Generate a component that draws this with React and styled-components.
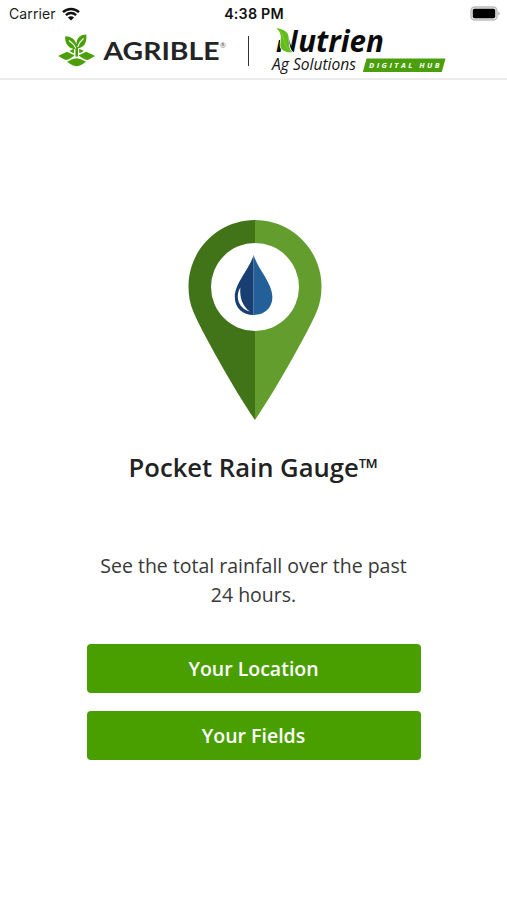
import styled, { createGlobalStyle } from "styled-components";

const GlobalStyle = createGlobalStyle`
  * {
    box-sizing: border-box;
  }

  body {
    margin: 0;
    background: #fff;
  }
`;

const Screen = styled.div`
  width: 507px;
  height: 900px;
  display: flex;
  flex-direction: column;
  background: #fff;
  font-family: "Open Sans", "Noto Sans", sans-serif;
  overflow: hidden;
`;

const StatusBar = styled.div`
  height: 27px;
  flex-shrink: 0;
  display: grid;
  grid-template-columns: 1fr auto 1fr;
  align-items: center;
  padding: 0 7px 0 9px;
  font-family: Inter, "Liberation Sans", sans-serif;
  font-size: 14px;
  line-height: 27px;
  color: #1c1c1c;
`;

const Carrier = styled.div`
  display: flex;
  align-items: center;
  gap: 6px;
  height: 27px;
  letter-spacing: 0.1px;
`;

const Clock = styled.div`
  font-weight: 600;
  font-size: 14.3px;
  height: 27px;
  letter-spacing: 0.2px;
  margin-left: -1px;
  color: #111;
`;

const Battery = styled.svg`
  justify-self: end;
  display: block;
`;

const Header = styled.header`
  height: 53px;
  flex-shrink: 0;
  display: flex;
  align-items: flex-start;
  padding-left: 56px;
  border-bottom: 2px solid #ececec;
`;

const Logo = styled.svg`
  display: block;
  flex-shrink: 0;
  overflow: visible;
`;

const Divider = styled.div`
  width: 1px;
  height: 30px;
  margin: 9px 21px 0 19px;
  background: #333;
`;

const Content = styled.main`
  flex: 1;
  display: flex;
  flex-direction: column;
  align-items: center;
  padding-top: 140px;
`;

const Pin = styled.svg`
  display: block;
  margin-left: 2px;
`;

const Title = styled.h1`
  margin: 29px 0 0;
  font-size: 25.6px;
  font-weight: 600;
  line-height: 38px;
  color: #222;
  white-space: nowrap;
`;

const Description = styled.p`
  width: 320px;
  margin: 64px 0 0;
  font-size: 19.5px;
  line-height: 29px;
  text-align: center;
  color: #383838;
`;

const Actions = styled.div`
  width: 334px;
  margin-top: 35px;
  display: flex;
  flex-direction: column;
  gap: 18px;
`;

const Button = styled.button`
  height: 49px;
  padding: 0 0 1px;
  border: none;
  border-radius: 4px;
  background: #4a9f00;
  color: #fff;
  font-family: inherit;
  font-size: 19.5px;
  font-weight: 600;
  cursor: pointer;
`;

function WifiIcon() {
  return (
    <svg width="18" height="14" viewBox="0 0 18 14" fill="none">
      <path d="M1 5.1C5.5 0.8 12.5 0.8 17 5.1" stroke="#111" strokeWidth="2.5" />
      <path d="M3.9 8.1C6.8 5.3 11.2 5.3 14.1 8.1" stroke="#111" strokeWidth="2.3" />
      <path d="M9 13.6L5.9 10.4C7.6 8.8 10.4 8.8 12.1 10.4Z" fill="#111" />
    </svg>
  );
}

function BatteryIcon() {
  return (
    <Battery width="30" height="15" viewBox="0 0 30 15">
      <rect x="1" y="1" width="26" height="13" rx="3.8" fill="#e4e4e4" stroke="#bdbdbd" strokeWidth="1.4" />
      <rect x="2.8" y="2.8" width="22.4" height="9.4" rx="1.8" fill="#000" />
      <path d="M28.3 5.5C30.2 6.2 30.2 8.8 28.3 9.5Z" fill="#aaa" />
    </Battery>
  );
}

function AgribleLogo() {
  return (
    <Logo width="173" height="48" viewBox="0 0 173 48">
      {/* field plots */}
      <g fill="#4a9f0b">
        <path d="M2 29L11 24.8L19 28.4C16 30 13 32.6 10 33C7 32.5 5 30 2 29Z" />
        <path d="M39.2 29L30.2 24.8L22.2 28.4C25.2 30 28.2 32.6 31.2 33C34.2 32.5 36.2 30 39.2 29Z" />
        <path d="M11 34.8C14 33.5 17 31.2 20.6 31.2C24.2 31.2 27.2 33.5 30.2 34.8C27 36.5 24.2 39.3 20.6 39.3C17 39.3 14 36.5 11 34.8Z" />
        <path d="M13.2 23.9L18 21.8V26C16.2 25.6 15 24.6 13.2 23.9Z" />
        <path d="M28 23.9L23.2 21.8V26C25 25.6 26.2 24.6 28 23.9Z" />
      </g>
      {/* sprout */}
      <path d="M18.4 18H23V29.8H18.4Z" fill="#fff" />
      <g fill="#4a9f0b">
        <path d="M19.4 17H22V29.6H19.4Z" />
        <path d="M20.6 22.5C12 21.8 8.8 16.5 9.2 9.2C17.2 9.6 21.5 14.5 20.6 22.5Z" />
        <path d="M21 21.5C18.8 13 22.5 7.6 30.3 7.4C31.2 15 28.5 20.5 21 21.5Z" />
      </g>
      <path d="M13 13.5C16 15.5 18.4 18 20 21.5M27.5 11.5C25 13.5 22.8 16.5 21.7 20" fill="none" stroke="#fff" strokeWidth="1.1" />
      <text
        x="47.5"
        y="33.4"
        fontFamily="Lato, sans-serif"
        fontWeight="700"
        fontSize="25.6"
        textLength="116"
        lengthAdjust="spacingAndGlyphs"
        fill="#242426"
      >
        AGRIBLE
      </text>
      <text x="164" y="20.5" fontFamily="Lato, sans-serif" fontSize="7" fill="#555">
        ®
      </text>
    </Logo>
  );
}

function NutrienLogo() {
  return (
    <Logo width="180" height="50" viewBox="0 0 180 50">
      <text
        x="5.8"
        y="25.2"
        fontFamily="Open Sans, sans-serif"
        fontWeight="700"
        fontStyle="italic"
        fontSize="29.8"
        textLength="108"
        lengthAdjust="spacingAndGlyphs"
        fill="#0b0b0b"
      >
        Nutrien
      </text>
      {/* the leaf lies over the diagonal of the first letter */}
      <path d="M5 0H17L19 5L10 13H5Z" fill="#fff" />
      <path
        d="M6.2 1.2C13.5 1.8 18.2 4.8 18.6 10C19 16 18 21 22.6 25.3C14 25.6 9.6 22.5 10.4 16.5C11.4 10.5 11.4 5 6.2 1.2Z"
        fill="#62bd18"
        stroke="#fff"
        strokeWidth="1.2"
        paintOrder="stroke"
      />
      <path d="M9.5 3.5C15 9 12.5 18 20.5 24.4" fill="none" stroke="#86cc46" strokeWidth="0.8" />
      <text
        x="2"
        y="43.2"
        fontFamily="Open Sans, sans-serif"
        fontStyle="italic"
        fontSize="15.7"
        textLength="84"
        lengthAdjust="spacingAndGlyphs"
        fill="#151515"
      >
        Ag Solutions
      </text>
      <path d="M96.5 31.5H175.5L171.8 45H92.8Z" fill="#4a9f0b" />
      <text
        x="99"
        y="41"
        fontFamily="Open Sans, sans-serif"
        fontWeight="700"
        fontStyle="italic"
        fontSize="7.6"
        textLength="70.5"
        fill="#fff"
      >
        DIGITAL HUB
      </text>
    </Logo>
  );
}

function RainPin() {
  return (
    <Pin width="134" height="200" viewBox="0 0 134 200">
      <path d="M67 0C30 0 0.5 30 0.5 66.5C0.5 76 2 84 5.5 92C12 108 45 168 67 200Z" fill="#417318" />
      <path d="M67 0C104 0 133.5 30 133.5 66.5C133.5 76 132 84 128.5 92C122 108 89 168 67 200Z" fill="#629d2e" />
      <circle cx="67" cy="67" r="44" fill="#fff" />
      <path d="M65.6 35C61.5 49 46.8 63 46.8 77C46.8 88 54.8 95 65.6 95Z" fill="#183e72" />
      <path d="M65.6 35C69.7 49 84.4 63 84.4 77C84.4 88 76.4 95 65.6 95Z" fill="#235f98" />
      <path d="M52.4 67.5C47.3 75 49.3 88 61.8 91.5C54.8 86.5 51.3 77.5 52.4 67.5Z" fill="#fff" />
    </Pin>
  );
}

export default function App() {
  return (
    <>
      <GlobalStyle />
      <Screen>
        <StatusBar>
          <Carrier>
            Carrier
            <WifiIcon />
          </Carrier>
          <Clock>4:38 PM</Clock>
          <BatteryIcon />
        </StatusBar>
        <Header>
          <AgribleLogo />
          <Divider />
          <NutrienLogo />
        </Header>
        <Content>
          <RainPin />
          <Title>Pocket Rain Gauge™</Title>
          <Description>See the total rainfall over the past 24 hours.</Description>
          <Actions>
            <Button>Your Location</Button>
            <Button>Your Fields</Button>
          </Actions>
        </Content>
      </Screen>
    </>
  );
}
